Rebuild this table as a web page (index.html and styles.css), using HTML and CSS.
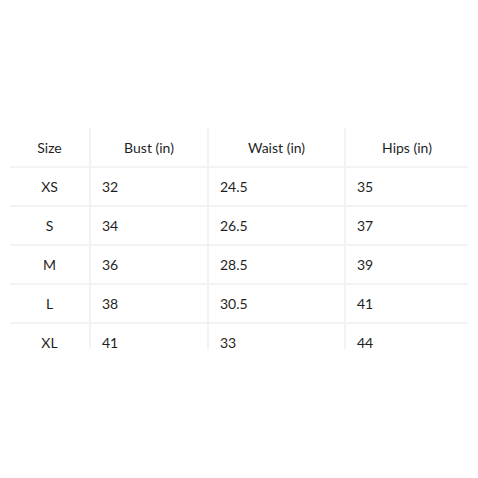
FILE: index.html
```html
<!DOCTYPE html>
<html>
<head>
<meta charset="utf-8">
<link rel="stylesheet" href="styles.css">
</head>
<body>
<div class="page">
  <div class="chart">
    <table class="size-table">
      <colgroup>
        <col class="c-size"><col class="c-bust"><col class="c-waist"><col class="c-hips">
      </colgroup>
      <thead>
        <tr><th>Size</th><th>Bust (in)</th><th>Waist (in)</th><th>Hips (in)</th></tr>
      </thead>
      <tbody>
        <tr><td>XS</td><td>32</td><td>24.5</td><td>35</td></tr>
        <tr><td>S</td><td>34</td><td>26.5</td><td>37</td></tr>
        <tr><td>M</td><td>36</td><td>28.5</td><td>39</td></tr>
        <tr><td>L</td><td>38</td><td>30.5</td><td>41</td></tr>
        <tr><td>XL</td><td>41</td><td>33</td><td>44</td></tr>
      </tbody>
    </table>
  </div>
</div>
</body>
</html>
```
FILE: styles.css
```css
html, body {
  margin: 0;
  padding: 0;
  background: #fff;
}
.page {
  padding: 128px 10px 0 10px;
}
.chart {
  width: 458px;
  height: 221px;
  overflow: hidden;
}
.size-table {
  width: 458px;
  border-collapse: collapse;
  table-layout: fixed;
  font-family: "Lato", "DejaVu Sans", sans-serif;
  font-size: 14px;
  color: #1f1f1f;
}
.c-size { width: 80px; }
.c-bust { width: 118px; }
.c-waist { width: 137px; }
.c-hips { width: 123px; }
.size-table th,
.size-table td {
  height: 37px;
  padding: 0 11px;
  border-bottom: 2px solid #f3f3f3;
  border-left: 2px solid #f3f3f3;
  font-weight: normal;
  text-align: left;
  vertical-align: middle;
}
.size-table th {
  height: 38px;
  text-align: center;
}
.size-table th:first-child,
.size-table td:first-child {
  border-left: none;
  text-align: center;
}
```
